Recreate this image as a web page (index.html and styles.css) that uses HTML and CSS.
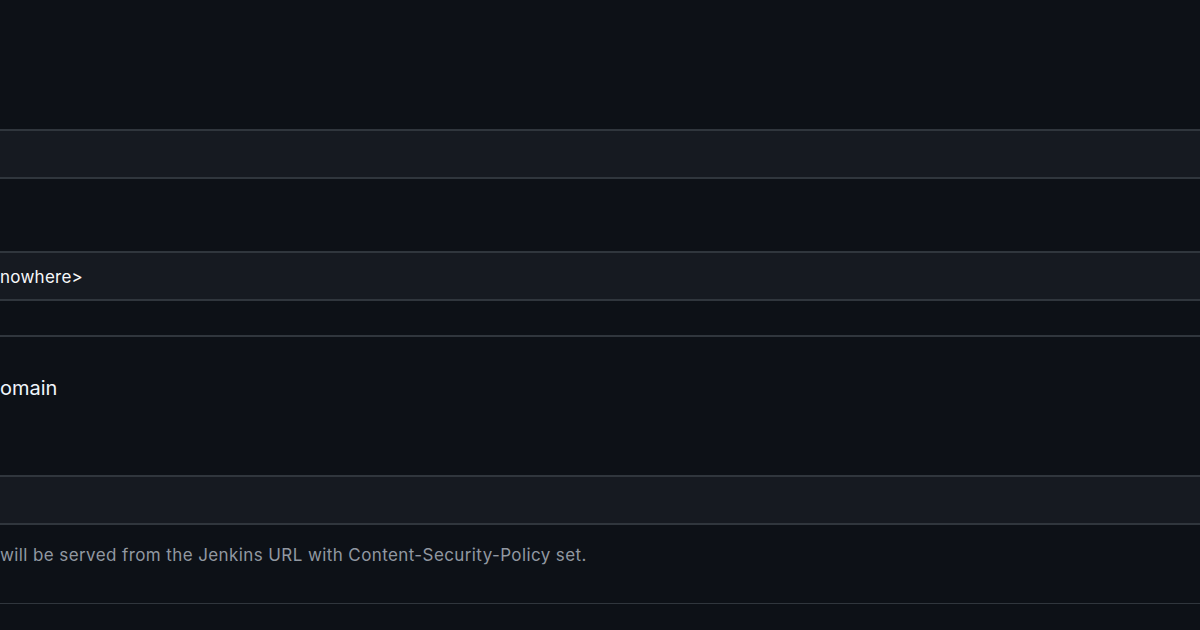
FILE: index.html
```html
<!DOCTYPE html>
<html lang="en">
<head>
  <meta charset="UTF-8">
  <meta name="viewport" content="width=device-width, initial-scale=1.0">
  <title>Configure Global Security</title>
  <link rel="stylesheet" href="styles.css">
</head>
<body>

  <div class="settings">
    <div class="field field-first">
      <input class="text-input" type="text" value="">
    </div>

    <div class="field field-second">
      <input class="text-input" type="text" value="nowhere&gt;">
    </div>

    <hr class="divider">

    <div class="section">
      <h3 class="section-title">omain</h3>
      <div class="field">
        <input class="text-input" type="text" value="">
      </div>
      <p class="help">will be served from the Jenkins URL with Content-Security-Policy set.</p>
    </div>

    <hr class="divider divider-thin">
  </div>

</body>
</html>
```

FILE: styles.css
```css
body {
  font-family: Inter, "Noto Sans", "Liberation Sans", sans-serif;
  background-color: #0d1117;
  color: #f0f6fc;
  margin: 0;
  overflow: hidden;
}

.settings {
  padding-top: 129px;
}

.field {
  margin: 0;
}

.field-second {
  margin-top: 72px;
}

.text-input {
  display: block;
  box-sizing: border-box;
  width: 100%;
  height: 50px;
  margin: 0;
  padding: 2px 0 0 0;
  background-color: #161a21;
  color: #f6f8fa;
  border: none;
  border-top: 2px solid #30363d;
  border-bottom: 2px solid #30363d;
  font-family: inherit;
  font-size: 17px;
  letter-spacing: 0.25px;
  outline: none;
}

.divider {
  border: none;
  border-top: 2px solid #30363d;
  margin: 34px 0 0 0;
  height: 0;
}

.divider-thin {
  border-top-width: 1px;
  margin-top: 0;
}

.section {
  padding-top: 36px;
}

.section-title {
  margin: 0;
  font-size: 20px;
  font-weight: 400;
  line-height: 30px;
  height: 30px;
}

.section .field {
  margin-top: 72px;
}

.help {
  margin: 0;
  padding: 18px 0 0 0;
  height: 60px;
  font-size: 17px;
  letter-spacing: 0.4px;
  line-height: 24px;
  color: #9198a1;
}
```
